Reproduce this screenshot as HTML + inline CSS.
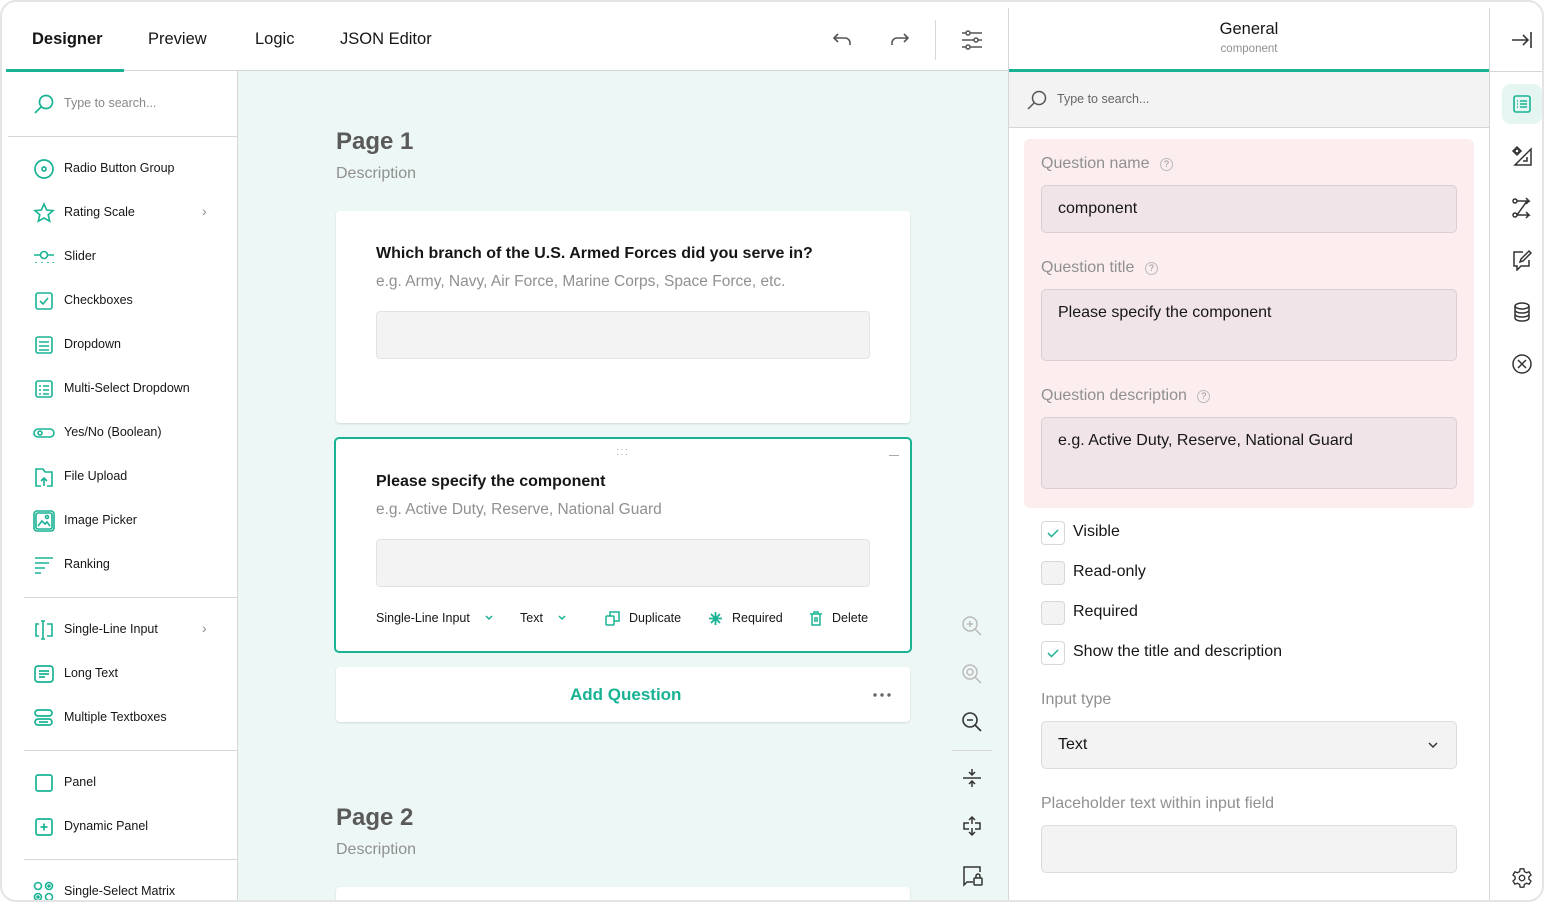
<!DOCTYPE html>
<html><head><meta charset="utf-8"><style>
*{box-sizing:border-box;margin:0;padding:0}
body{width:1544px;height:902px;overflow:hidden;background:#fff;font-family:"Liberation Sans",sans-serif;color:#161616;position:relative}
.a{position:absolute}
.frame{left:0;top:0;width:1544px;height:902px;border-radius:16px;overflow:hidden;background:#fff}
.border{left:0;top:0;width:1544px;height:902px;border:2px solid #e4e4e4;border-radius:16px;pointer-events:none}
.tab{top:30px;font-size:16.5px;color:#161616}
.hl{height:1px;background:#d6d6d6}
.vl{width:1px;background:#d6d6d6}
.item{left:64px;font-size:12.5px;color:#161616}
.ic{left:33px;width:22px;height:22px}
svg{display:block}
.card{background:#fff;border-radius:4px;box-shadow:0 1px 2px rgba(0,0,0,.12)}
.qt{font-size:16px;font-weight:bold}
.qd{font-size:15.5px;color:#909090}
.inp{background:#f3f3f3;border:1px solid #e3e3e3;border-radius:4px}
.pl{font-size:16px;color:#909090}
.pin{background:#f0e4e8;border:1px solid #dccfd3;border-radius:5px;font-size:16px;padding:14px 16px;color:#161616}
.cb{width:24px;height:24px;border:1px solid #d8d8d8;background:#f3f3f3;border-radius:4px}
.cbl{font-size:16px}
.q{display:inline-block;width:13px;height:13px;border:1px solid #bbb;border-radius:50%;font-size:9px;text-align:center;line-height:11px;margin-left:6px;vertical-align:1px}
</style></head><body>
<div class="a frame">
<div class="a tab" style="left:32px;font-weight:bold">Designer</div>
<div class="a tab" style="left:148px">Preview</div>
<div class="a tab" style="left:255px">Logic</div>
<div class="a tab" style="left:340px">JSON Editor</div>
<div class="a hl" style="left:6px;top:70px;width:1002px"></div>
<div class="a" style="left:6px;top:69px;width:118px;height:3px;background:#19b394"></div>
<svg class="a" style="left:831px;top:29px" width="24" height="22" viewBox="0 0 24 22" fill="none" stroke="#555" stroke-width="1.6"><path d="M7 5 3 9l4 4M3 9h11a5 5 0 0 1 5 5v2"/></svg>
<svg class="a" style="left:887px;top:29px" width="24" height="22" viewBox="0 0 24 22" fill="none" stroke="#555" stroke-width="1.6"><path d="M17 5l4 4-4 4M21 9H10a5 5 0 0 0-5 5v2"/></svg>
<div class="a vl" style="left:935px;top:20px;height:40px"></div>
<svg class="a" style="left:960px;top:29px" width="24" height="22" viewBox="0 0 24 22" fill="none" stroke="#555" stroke-width="1.5"><path d="M2 4h20M2 11h20M2 18h20"/><circle cx="8" cy="4" r="2" fill="#fff"/><circle cx="16" cy="11" r="2" fill="#fff"/><circle cx="8" cy="18" r="2" fill="#fff"/></svg>

<div class="a vl" style="left:237px;top:71px;height:831px"></div>
<svg class="a" style="left:33px;top:93px" width="22" height="22" viewBox="0 0 22 22" fill="none" stroke="#19b394" stroke-width="1.7"><circle cx="13" cy="9" r="6.5"/><path d="M8 14 2 20"/></svg>
<div class="a" style="left:64px;top:96px;font-size:12.5px;color:#888">Type to search...</div>
<div class="a hl" style="left:8px;top:136px;width:229px"></div>

<svg class="a ic" style="top:158px" viewBox="0 0 22 22" fill="none" stroke="#19b394" stroke-width="1.7"><circle cx="11" cy="11" r="9"/><circle cx="11" cy="11" r="2"/></svg>
<div class="a item" style="top:161px">Radio Button Group</div>
<svg class="a ic" style="top:202px" viewBox="0 0 22 22" fill="none" stroke="#19b394" stroke-width="1.6"><path d="M11 2l2.7 6 6.3.6-4.8 4.2 1.5 6.4L11 16l-5.7 3.2 1.5-6.4L2 8.6 8.3 8z"/></svg>
<div class="a item" style="top:205px">Rating Scale</div>
<div class="a" style="left:202px;top:203px;color:#888;font-size:14px">›</div>
<svg class="a ic" style="top:246px" viewBox="0 0 22 22" fill="none" stroke="#19b394" stroke-width="1.6"><path d="M1 9h6M15 9h6M3 16v1M9 16v1M15 16v1M20 16v1"/><circle cx="11" cy="9" r="3.5"/></svg>
<div class="a item" style="top:249px">Slider</div>
<svg class="a ic" style="top:290px" viewBox="0 0 22 22" fill="none" stroke="#19b394" stroke-width="1.6"><rect x="3" y="3" width="16" height="16" rx="2"/><path d="M7 11l3 3 5-6"/></svg>
<div class="a item" style="top:293px">Checkboxes</div>
<svg class="a ic" style="top:334px" viewBox="0 0 22 22" fill="none" stroke="#19b394" stroke-width="1.6"><rect x="3" y="3" width="16" height="16" rx="2"/><path d="M6 8h10M6 12h10M6 16h10"/></svg>
<div class="a item" style="top:337px">Dropdown</div>
<svg class="a ic" style="top:378px" viewBox="0 0 22 22" fill="none" stroke="#19b394" stroke-width="1.6"><rect x="3" y="3" width="16" height="16" rx="2"/><path d="M6 8h2M10 8h6M6 12h2M10 12h6M6 16h2M10 16h6"/></svg>
<div class="a item" style="top:381px">Multi-Select Dropdown</div>
<svg class="a ic" style="top:422px" viewBox="0 0 22 22" fill="none" stroke="#19b394" stroke-width="1.6"><rect x="1" y="7" width="20" height="8" rx="4"/><circle cx="7" cy="11" r="2"/></svg>
<div class="a item" style="top:425px">Yes/No (Boolean)</div>
<svg class="a ic" style="top:466px" viewBox="0 0 22 22" fill="none" stroke="#19b394" stroke-width="1.6"><path d="M8 20H3V3h7l2 3h7v14h-5M11 20v-8M8 15l3-3 3 3"/></svg>
<div class="a item" style="top:469px">File Upload</div>
<svg class="a ic" style="top:510px" viewBox="0 0 22 22" fill="none" stroke="#19b394" stroke-width="1.6"><rect x="3" y="3" width="16" height="16" rx="2"/><rect x="1" y="1" width="20" height="20" rx="3"/><path d="M5 16l4-5 3 3 2-2 3 4"/><circle cx="14" cy="7" r="1.5"/></svg>
<div class="a item" style="top:513px">Image Picker</div>
<svg class="a ic" style="top:554px" viewBox="0 0 22 22" fill="none" stroke="#19b394" stroke-width="1.6"><path d="M2 4h18M2 9h14M2 14h10M2 19h6"/></svg>
<div class="a item" style="top:557px">Ranking</div>
<div class="a hl" style="left:24px;top:597px;width:213px"></div>
<svg class="a ic" style="top:619px" viewBox="0 0 22 22" fill="none" stroke="#19b394" stroke-width="1.6"><path d="M6 5H3v12h3M14 5h5v12h-5M8 2h4M8 20h4M10 2v18"/></svg>
<div class="a item" style="top:622px">Single-Line Input</div>
<div class="a" style="left:202px;top:620px;color:#888;font-size:14px">›</div>
<svg class="a ic" style="top:663px" viewBox="0 0 22 22" fill="none" stroke="#19b394" stroke-width="1.7"><rect x="2" y="3" width="18" height="16" rx="3"/><path d="M6 8h10M6 11h10M6 14h6"/></svg>
<div class="a item" style="top:666px">Long Text</div>
<svg class="a ic" style="top:707px" viewBox="0 0 22 22" fill="none" stroke="#19b394" stroke-width="1.7"><rect x="2" y="3" width="17" height="6" rx="3"/><rect x="2" y="12" width="17" height="6" rx="3"/><path d="M6 15h9"/></svg>
<div class="a item" style="top:710px">Multiple Textboxes</div>
<div class="a hl" style="left:24px;top:750px;width:213px"></div>
<svg class="a ic" style="top:772px" viewBox="0 0 22 22" fill="none" stroke="#19b394" stroke-width="1.7"><rect x="3" y="3" width="16" height="16" rx="2"/></svg>
<div class="a item" style="top:775px">Panel</div>
<svg class="a ic" style="top:816px" viewBox="0 0 22 22" fill="none" stroke="#19b394" stroke-width="1.7"><rect x="3" y="3" width="16" height="16" rx="2"/><path d="M11 7.5v7M7.5 11h7"/></svg>
<div class="a item" style="top:819px">Dynamic Panel</div>
<div class="a hl" style="left:24px;top:859px;width:213px"></div>
<svg class="a ic" style="top:881px" viewBox="0 0 22 22" fill="none" stroke="#19b394" stroke-width="1.6"><circle cx="5" cy="5" r="3.5"/><circle cx="16" cy="5" r="3.5"/><circle cx="5" cy="16" r="3.5"/><circle cx="16" cy="16" r="3.5"/><circle cx="16" cy="5" r="1"/><circle cx="5" cy="16" r="1"/></svg>
<div class="a item" style="top:884px">Single-Select Matrix</div>

<div class="a" style="left:238px;top:71px;width:770px;height:831px;background:#edf7f5"></div>
<div class="a" style="left:336px;top:128px;font-size:24px;font-weight:bold;color:#5a5a5a">Page 1</div>
<div class="a" style="left:336px;top:165px;font-size:16px;color:#909090">Description</div>
<div class="a card" style="left:336px;top:211px;width:574px;height:212px"></div>
<div class="a qt" style="left:376px;top:245px">Which branch of the U.S. Armed Forces did you serve in?</div>
<div class="a qd" style="left:376px;top:273px">e.g. Army, Navy, Air Force, Marine Corps, Space Force, etc.</div>
<div class="a inp" style="left:376px;top:311px;width:494px;height:48px"></div>

<div class="a" style="left:334px;top:437px;width:578px;height:216px;background:#fff;border:2px solid #19b394;border-radius:5px"></div>
<div class="a" style="left:616px;top:447px;color:#aaa;font-size:10px;letter-spacing:1px;line-height:5px">···<br>···</div>
<div class="a" style="left:889px;top:455px;width:10px;height:1px;background:#aaa"></div>
<div class="a qt" style="left:376px;top:473px">Please specify the component</div>
<div class="a qd" style="left:376px;top:501px">e.g. Active Duty, Reserve, National Guard</div>
<div class="a inp" style="left:376px;top:539px;width:494px;height:48px"></div>
<div class="a" style="left:376px;top:611px;font-size:12.5px">Single-Line Input</div>
<svg class="a" style="left:484px;top:614px" width="10" height="8" viewBox="0 0 10 8" fill="none" stroke="#19b394" stroke-width="1.5"><path d="M2 2l3 3 3-3"/></svg>
<div class="a" style="left:520px;top:611px;font-size:12.5px">Text</div>
<svg class="a" style="left:557px;top:614px" width="10" height="8" viewBox="0 0 10 8" fill="none" stroke="#19b394" stroke-width="1.5"><path d="M2 2l3 3 3-3"/></svg>
<svg class="a" style="left:605px;top:611px" width="15" height="15" viewBox="0 0 15 15" fill="none" stroke="#19b394" stroke-width="1.5"><rect x="1" y="5" width="8" height="9" rx="1"/><path d="M5 5V1h9v9h-5"/></svg>
<div class="a" style="left:629px;top:611px;font-size:12.5px">Duplicate</div>
<svg class="a" style="left:708px;top:611px" width="15" height="15" viewBox="0 0 15 15" fill="none" stroke="#19b394" stroke-width="1.8"><path d="M7.5 1v13M1 7.5h13M3 3l9 9M12 3l-9 9"/></svg>
<div class="a" style="left:732px;top:611px;font-size:12.5px">Required</div>
<svg class="a" style="left:809px;top:611px" width="14" height="15" viewBox="0 0 14 15" fill="none" stroke="#19b394" stroke-width="1.5"><path d="M1 3h12M5 3V1h4v2M3 3v11h8V3M6 6v5M8 6v5"/></svg>
<div class="a" style="left:832px;top:611px;font-size:12.5px">Delete</div>

<div class="a card" style="left:336px;top:667px;width:574px;height:55px"></div>
<div class="a" style="left:570px;top:685px;font-size:17px;font-weight:bold;color:#19b394">Add Question</div>
<svg class="a" style="left:872px;top:692px" width="20" height="6" viewBox="0 0 20 6" fill="#666"><circle cx="3" cy="3" r="1.7"/><circle cx="10" cy="3" r="1.7"/><circle cx="17" cy="3" r="1.7"/></svg>

<div class="a" style="left:336px;top:804px;font-size:24px;font-weight:bold;color:#5a5a5a">Page 2</div>
<div class="a" style="left:336px;top:841px;font-size:16px;color:#909090">Description</div>
<div class="a card" style="left:336px;top:887px;width:574px;height:30px"></div>

<svg class="a" style="left:961px;top:615px" width="22" height="22" viewBox="0 0 22 22" fill="none" stroke="#bbb" stroke-width="1.5"><circle cx="9" cy="9" r="7"/><path d="M14 14l6 6M9 6v6M6 9h6"/></svg>
<svg class="a" style="left:961px;top:663px" width="22" height="22" viewBox="0 0 22 22" fill="none" stroke="#bbb" stroke-width="1.5"><circle cx="9" cy="9" r="7"/><circle cx="9" cy="9" r="3"/><path d="M14 14l6 6"/></svg>
<svg class="a" style="left:961px;top:711px" width="22" height="22" viewBox="0 0 22 22" fill="none" stroke="#333" stroke-width="1.6"><circle cx="9" cy="9" r="7"/><path d="M14 14l6 6M6 9h6"/></svg>
<div class="a hl" style="left:952px;top:750px;width:40px"></div>
<svg class="a" style="left:961px;top:767px" width="22" height="22" viewBox="0 0 22 22" fill="none" stroke="#333" stroke-width="1.5"><path d="M2 11h18M11 2v6M8 5l3 3 3-3M11 20v-6M8 17l3-3 3 3"/></svg>
<svg class="a" style="left:961px;top:815px" width="22" height="22" viewBox="0 0 22 22" fill="none" stroke="#333" stroke-width="1.5"><path d="M11 2v7M8 5l3-3 3 3M11 20v-7M8 17l3 3 3-3M8 8H3v6h5M14 8h5v6h-5"/></svg>
<svg class="a" style="left:961px;top:864px" width="24" height="24" viewBox="0 0 24 24" fill="none" stroke="#333" stroke-width="1.5"><path d="M12 18H6l-3 3V3h16v5"/><rect x="13" y="14" width="8" height="7" rx="1"/><path d="M15 14v-2a2 2 0 0 1 4 0v2"/></svg>

<div class="a vl" style="left:1008px;top:8px;height:894px"></div>
<div class="a" style="left:1009px;top:20px;width:480px;text-align:center;font-size:16.5px">General</div>
<div class="a" style="left:1009px;top:43px;width:480px;text-align:center;font-size:11.5px;color:#909090">component</div>
<div class="a" style="left:1009px;top:69px;width:480px;height:3px;background:#19b394"></div>
<div class="a" style="left:1009px;top:72px;width:480px;height:56px;background:#f3f3f3;border-bottom:1px solid #d6d6d6"></div>
<svg class="a" style="left:1026px;top:89px" width="22" height="22" viewBox="0 0 22 22" fill="none" stroke="#555" stroke-width="1.5"><circle cx="13" cy="9" r="6.5"/><path d="M8 14 2 20"/></svg>
<div class="a" style="left:1057px;top:92px;font-size:12.5px;color:#666">Type to search...</div>

<div class="a" style="left:1024px;top:139px;width:450px;height:369px;background:#fcedef;border-radius:6px"></div>
<div class="a pl" style="left:1041px;top:155px">Question name <span class="q">?</span></div>
<div class="a pin" style="left:1041px;top:185px;width:416px;height:48px">component</div>
<div class="a pl" style="left:1041px;top:259px">Question title <span class="q">?</span></div>
<div class="a pin" style="left:1041px;top:289px;width:416px;height:72px">Please specify the component</div>
<div class="a pl" style="left:1041px;top:387px">Question description <span class="q">?</span></div>
<div class="a pin" style="left:1041px;top:417px;width:416px;height:72px">e.g. Active Duty, Reserve, National Guard</div>

<div class="a cb" style="left:1041px;top:521px;background:#fff"><svg width="22" height="22" viewBox="0 0 22 22" fill="none" stroke="#19b394" stroke-width="1.5"><path d="M6 11l3.5 3.5L16 8"/></svg></div>
<div class="a cbl" style="left:1073px;top:523px">Visible</div>
<div class="a cb" style="left:1041px;top:561px"></div>
<div class="a cbl" style="left:1073px;top:563px">Read-only</div>
<div class="a cb" style="left:1041px;top:601px"></div>
<div class="a cbl" style="left:1073px;top:603px">Required</div>
<div class="a cb" style="left:1041px;top:641px;background:#fff"><svg width="22" height="22" viewBox="0 0 22 22" fill="none" stroke="#19b394" stroke-width="1.5"><path d="M6 11l3.5 3.5L16 8"/></svg></div>
<div class="a cbl" style="left:1073px;top:643px">Show the title and description</div>

<div class="a pl" style="left:1041px;top:691px">Input type</div>
<div class="a pin" style="left:1041px;top:721px;width:416px;height:48px;background:#f3f3f3;border-color:#dcdcdc">Text</div>
<svg class="a" style="left:1427px;top:740px" width="12" height="10" viewBox="0 0 12 10" fill="none" stroke="#333" stroke-width="1.5"><path d="M2 3l4 4 4-4"/></svg>
<div class="a pl" style="left:1041px;top:795px">Placeholder text within input field</div>
<div class="a pin" style="left:1041px;top:825px;width:416px;height:48px;background:#f3f3f3;border-color:#dcdcdc"></div>

<div class="a vl" style="left:1489px;top:8px;height:894px"></div>
<div class="a hl" style="left:1490px;top:71px;width:54px"></div>
<svg class="a" style="left:1510px;top:30px" width="24" height="20" viewBox="0 0 24 20" fill="none" stroke="#333" stroke-width="1.6"><path d="M2 10h16M13 5l5 5-5 5M21 2v16"/></svg>
<div class="a" style="left:1502px;top:84px;width:40px;height:40px;background:#e5f6f2;border-radius:8px"></div>
<svg class="a" style="left:1512px;top:94px" width="20" height="20" viewBox="0 0 20 20" fill="none" stroke="#19b394" stroke-width="1.6"><rect x="2" y="2" width="16" height="16" rx="2"/><path d="M5 7h1M8 7h7M5 10h1M8 10h7M5 13h1M8 13h7"/></svg>
<svg class="a" style="left:1511px;top:145px" width="22" height="22" viewBox="0 0 22 22" fill="none" stroke="#333" stroke-width="1.5"><path d="M20 4v16H4zM16 12v4h-4"/><circle cx="6" cy="6" r="2"/><path d="M2 6l4-4 4 4-4 4z"/></svg>
<svg class="a" style="left:1511px;top:197px" width="22" height="22" viewBox="0 0 22 22" fill="none" stroke="#333" stroke-width="1.5"><circle cx="4" cy="4" r="2"/><circle cx="4" cy="18" r="2"/><path d="M6 4h12l-3-3M18 4l-3 3M16 4 6 18M6 18h12l-3-3M18 18l-3 3"/></svg>
<svg class="a" style="left:1511px;top:249px" width="22" height="22" viewBox="0 0 22 22" fill="none" stroke="#333" stroke-width="1.5"><path d="M12 3H3v14h3v4l4-4h8v-6"/><path d="M9 13l1-3 8-8 2 2-8 8z"/></svg>
<svg class="a" style="left:1511px;top:301px" width="22" height="22" viewBox="0 0 22 22" fill="none" stroke="#333" stroke-width="1.5"><ellipse cx="11" cy="5" rx="7" ry="3"/><path d="M4 5v12c0 1.7 3 3 7 3s7-1.3 7-3V5M4 9c0 1.7 3 3 7 3s7-1.3 7-3M4 13c0 1.7 3 3 7 3s7-1.3 7-3"/></svg>
<svg class="a" style="left:1511px;top:353px" width="22" height="22" viewBox="0 0 22 22" fill="none" stroke="#333" stroke-width="1.5"><circle cx="11" cy="11" r="9"/><path d="M7 7l8 8M15 7l-8 8"/></svg>
<svg class="a" style="left:1511px;top:867px" width="22" height="22" viewBox="0 0 24 24" fill="none" stroke="#333" stroke-width="1.5"><circle cx="12" cy="12" r="3"/><path d="M10 2h4l.6 3 2.3 1.3 2.9-1 2 3.4-2.3 2v2.6l2.3 2-2 3.4-2.9-1-2.3 1.3-.6 3h-4l-.6-3-2.3-1.3-2.9 1-2-3.4 2.3-2v-2.6l-2.3-2 2-3.4 2.9 1L9.4 5z"/></svg>
</div>
<div class="a border"></div>
</body></html>
